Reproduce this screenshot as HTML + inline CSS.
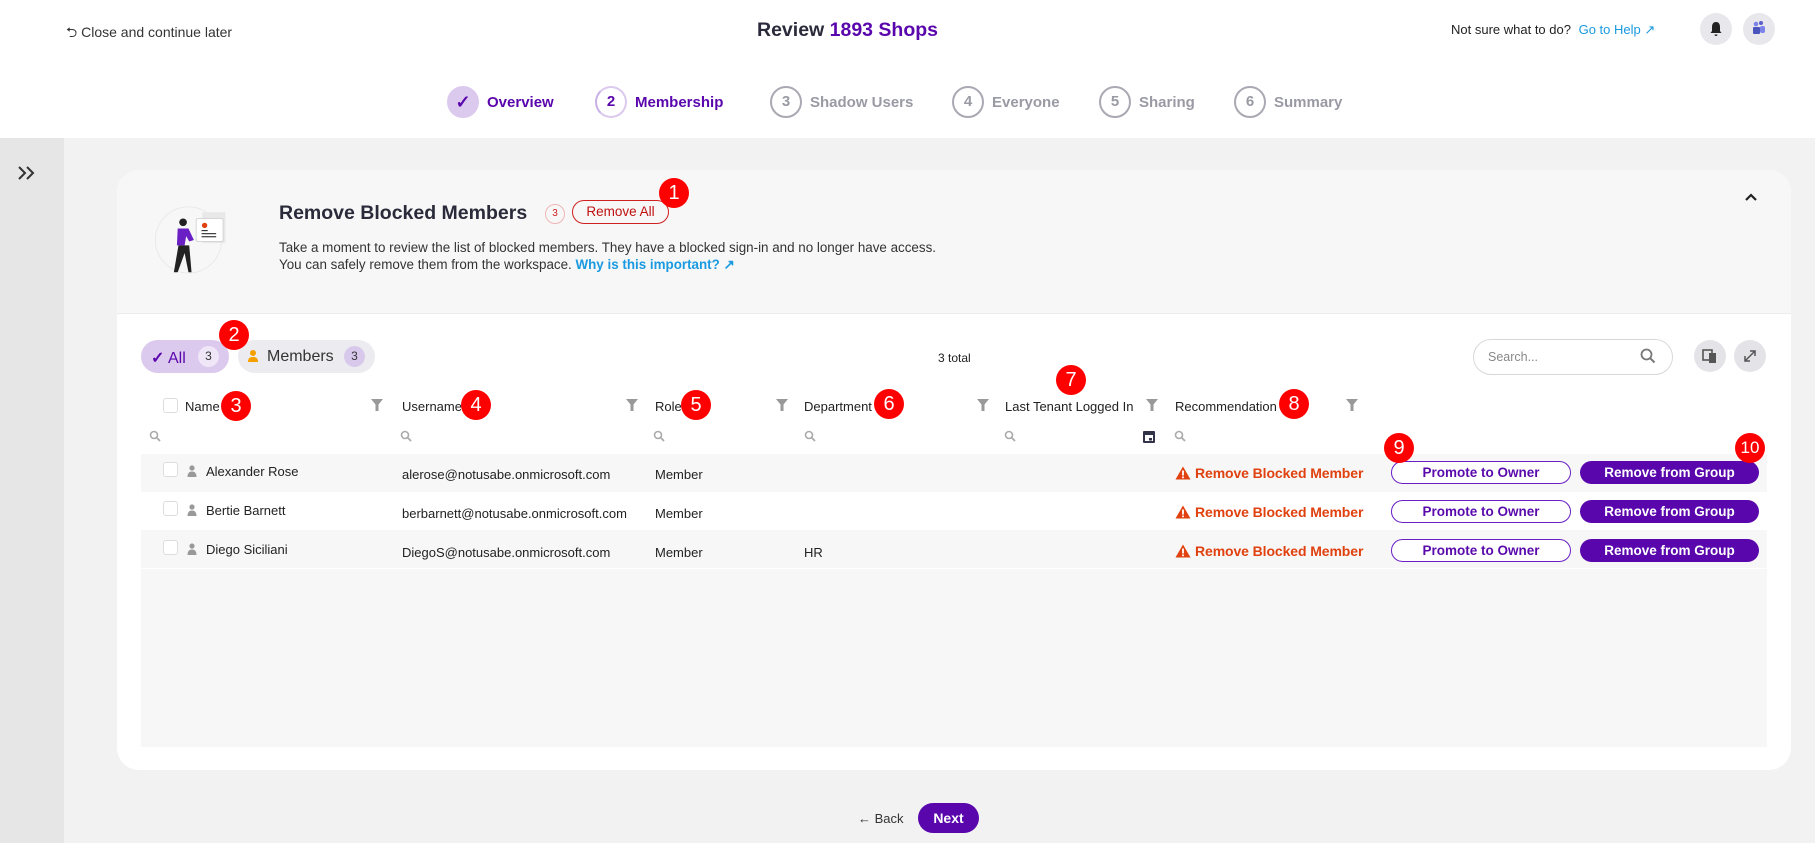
<!DOCTYPE html>
<html><head><meta charset="utf-8">
<style>
*{box-sizing:border-box;margin:0;padding:0}
body{width:1815px;height:843px;overflow:hidden;font-family:"Liberation Sans",sans-serif;background:#f2f2f2;position:relative;color:#222}
.a{position:absolute;white-space:nowrap}
.hdr{position:absolute;left:0;top:0;width:1815px;height:138px;background:#fff}
.side{position:absolute;left:0;top:138px;width:64px;height:705px;background:#e6e6e6}
.step{position:absolute;top:86px;width:32px;height:32px;border-radius:50%;border:2px solid #a9a9b3;color:#9a9aa5;font-size:15px;font-weight:bold;text-align:center;line-height:28px}
.stl{position:absolute;top:94px;font-size:15px;font-weight:bold;color:#9a9aa5}
.card{position:absolute;left:117px;top:170px;width:1674px;height:600px;background:#fff;border-radius:22px;overflow:hidden}
.top{position:absolute;left:0;top:0;width:1674px;height:144px;background:#f7f7f7;border-bottom:1px solid #ececec}
.badge{position:absolute;width:30px;height:30px;border-radius:50%;background:#f00;color:#fff;font-size:20px;text-align:center;line-height:30px}
.th{position:absolute;top:399px;font-size:13px;color:#222}
.fil{position:absolute;top:398px}
.srch{position:absolute;top:430px}
.row{position:absolute;left:141px;width:1626px;height:38px}
.cell{position:absolute;font-size:13px;color:#222}
.cb{position:absolute;width:15px;height:15px;border:1px solid #ddd;border-radius:3px;background:#fff}
.rec{position:absolute;left:1175px;font-size:14px;color:#e0410f;font-weight:bold;letter-spacing:-0.1px}
.rec svg{vertical-align:-2px;margin-right:4px}
.pro{position:absolute;left:1391px;width:180px;height:23px;border:1px solid #6a1fc4;border-radius:12px;color:#5a0aac;font-size:13.5px;font-weight:bold;text-align:center;line-height:21px;background:#fff}
.rfg{position:absolute;left:1580px;width:179px;height:23px;border-radius:12px;background:#5a06ad;color:#fff;font-size:13.5px;font-weight:bold;text-align:center;line-height:23px}
</style></head><body>
<div class="hdr"></div>
<div class="a" style="left:66px;top:22px;font-size:14px;color:#333">&#x2B8C;&#xFE0E; Close and continue later</div>
<div class="a" style="left:757px;top:19px;font-size:19.5px;font-weight:bold;color:#2a2a3a">Review <span style="color:#5a06ad">1893 Shops</span></div>
<div class="a" style="left:1451px;top:22px;font-size:13px;color:#222">Not sure what to do? <span style="color:#1a9ae0;margin-left:4px">Go to Help &#x2197;</span></div>
<div class="a" style="left:1700px;top:13px;width:32px;height:32px;border-radius:50%;background:#e8e8ec"></div>
<svg class="a" style="left:1709px;top:21px" width="14" height="16" viewBox="0 0 14 16"><path d="M7 1c-3 0-4 2.5-4 5v4L1.5 12h11L11 10V6c0-2.5-1-5-4-5z M5.5 13.5a1.5 1.5 0 0 0 3 0z" fill="#222"/></svg>
<div class="a" style="left:1743px;top:13px;width:32px;height:32px;border-radius:50%;background:#e8e8ec"></div>
<svg class="a" style="left:1751px;top:20px" width="16" height="16" viewBox="0 0 16 16"><circle cx="10" cy="3" r="2" fill="#5b5fc7"/><circle cx="5" cy="4" r="2.3" fill="#7b83eb"/><rect x="2" y="7" width="7" height="7" rx="1" fill="#4b53bc"/><rect x="9" y="6" width="5" height="7" rx="2" fill="#7b83eb"/></svg>

<div class="step" style="left:447px;background:#dcc9ee;border-color:#dcc9ee;color:#5a06ad;font-size:18px">&#x2713;</div>
<div class="stl" style="left:487px;color:#5a06ad">Overview</div>
<div class="step" style="left:595px;border-color:#dcc9ee;color:#5a06ad;border-left-color:#c9b0e6">2</div>
<div class="stl" style="left:635px;color:#5a06ad">Membership</div>
<div class="step" style="left:770px">3</div><div class="stl" style="left:810px">Shadow Users</div>
<div class="step" style="left:952px">4</div><div class="stl" style="left:992px">Everyone</div>
<div class="step" style="left:1099px">5</div><div class="stl" style="left:1139px">Sharing</div>
<div class="step" style="left:1234px">6</div><div class="stl" style="left:1274px">Summary</div>

<div class="side"></div>
<svg class="a" style="left:17px;top:165px" width="20" height="16" viewBox="0 0 20 16"><path d="M2 2l6 6-6 6M10 2l6 6-6 6" fill="none" stroke="#333" stroke-width="2"/></svg>

<div class="card">
 <div class="top"></div>
 <svg class="a" style="left:33px;top:24px" width="100" height="92" viewBox="0 0 130 100"><circle cx="50" cy="50" r="43" fill="none" stroke="#e6e6e6"/><rect x="68" y="14" width="30" height="40" fill="#e8e8e8"/><rect x="60" y="22" width="35" height="30" rx="2" fill="#fff" stroke="#ccc"/><circle cx="71" cy="31" r="3.5" fill="#e0410f"/><rect x="67" y="37" width="8" height="1.5" fill="#333"/><rect x="67" y="41" width="19" height="1.5" fill="#333"/><rect x="67" y="45" width="19" height="1.5" fill="#333"/><circle cx="43" cy="27" r="5" fill="#222"/><path d="M36 35l14 0 7 15-6 2-4-7-2 12-10 0z" fill="#6a1fc4"/><path d="M37 57l14 0 3 35-4 0-5-25-9 25-5 0z" fill="#222"/></svg>
 <div class="a" style="left:162px;top:32px;font-size:19.5px;font-weight:bold;color:#2a2a3a">Remove Blocked Members</div>
 <div class="a" style="left:428px;top:34px;width:20px;height:20px;border-radius:50%;border:1px solid #f2b6b6;color:#d02020;font-size:10px;text-align:center;line-height:18px">3</div>
 <div class="a" style="left:455px;top:30px;width:97px;height:24px;border:1px solid #d02020;border-radius:12px;color:#c01010;font-size:13.5px;text-align:center;line-height:22px">Remove All</div>
 <div class="badge" style="left:542px;top:8px">1</div>
 <div class="a" style="left:162px;top:70px;font-size:13.4px;color:#333;line-height:16.5px">Take a moment to review the list of blocked members. They have a blocked sign-in and no longer have access.<br>You can safely remove them from the workspace. <span style="color:#1a9ae0;font-weight:bold">Why is this important? &#x2197;</span></div>
 <svg class="a" style="left:1627px;top:22px" width="14" height="10" viewBox="0 0 14 10"><path d="M2 8l5-5 5 5" fill="none" stroke="#222" stroke-width="2.2"/></svg>
 <div class="a" style="left:24px;top:399px;width:1626px;height:178px;background:#f7f7f7"></div>
</div>

<div class="a" style="left:141px;top:340px;width:88px;height:33px;border-radius:17px;background:#dcc9ee"></div>
<div class="a" style="left:151px;top:348px;font-size:16px;color:#5a06ad"><b>&#x2713;</b> All</div>
<div class="a" style="left:198px;top:346px;width:21px;height:21px;border-radius:50%;background:#efe7f8;color:#333;font-size:12px;text-align:center;line-height:21px">3</div>
<div class="a" style="left:238px;top:340px;width:137px;height:33px;border-radius:17px;background:#ececf0"></div>
<svg class="a" style="left:247px;top:349px" width="12" height="14" viewBox="0 0 12 14"><circle cx="6" cy="4" r="3" fill="#f5a000"/><path d="M1 13c0-4 2-5 5-5s5 1 5 5z" fill="#f5a000"/></svg>
<div class="a" style="left:267px;top:348px;font-size:16px;color:#333">Members</div>
<div class="a" style="left:344px;top:346px;width:21px;height:21px;border-radius:50%;background:#d8c9ec;color:#333;font-size:12px;text-align:center;line-height:21px">3</div>
<div class="badge" style="left:219px;top:320px">2</div>
<div class="a" style="left:938px;top:351px;font-size:12px;color:#222">3 total</div>
<div class="a" style="left:1473px;top:339px;width:200px;height:36px;border:1px solid #d8d8d8;border-radius:18px;background:#fff"></div>
<div class="a" style="left:1488px;top:350px;font-size:12.5px;color:#888">Search...</div>
<svg class="a" style="left:1640px;top:348px" width="16" height="16" viewBox="0 0 16 16"><circle cx="6.5" cy="6.5" r="5" fill="none" stroke="#777" stroke-width="1.8"/><path d="M10 10l4.5 4.5" stroke="#777" stroke-width="2"/></svg>
<div class="a" style="left:1694px;top:340px;width:32px;height:32px;border-radius:50%;background:#e4e4e8"></div>
<svg class="a" style="left:1702px;top:348px" width="16" height="16" viewBox="0 0 16 16"><rect x="1" y="2" width="9" height="10" fill="none" stroke="#555" stroke-width="1.6"/><rect x="7" y="5" width="7" height="10" fill="#555"/></svg>
<div class="a" style="left:1734px;top:340px;width:32px;height:32px;border-radius:50%;background:#e4e4e8"></div>
<svg class="a" style="left:1743px;top:349px" width="14" height="14" viewBox="0 0 14 14"><path d="M2 12L12 2M7 2h5v5M2 7v5h5" fill="none" stroke="#555" stroke-width="1.5"/></svg>

<div class="cb" style="left:163px;top:398px"></div>
<div class="th" style="left:185px">Name</div>
<div class="th" style="left:402px">Username</div>
<div class="th" style="left:655px">Role</div>
<div class="th" style="left:804px">Department</div>
<div class="th" style="left:1005px">Last Tenant Logged In</div>
<div class="th" style="left:1175px">Recommendation</div>
<svg width="0" height="0" style="position:absolute"><defs><symbol id="f" viewBox="0 0 14 14"><path d="M1 1h12L8.5 6.5V13h-3V6.5z" fill="#999"/></symbol><symbol id="s" viewBox="0 0 12 12"><circle cx="5" cy="5" r="3.5" fill="none" stroke="#aaa" stroke-width="1.6"/><path d="M7.5 7.5L11 11" stroke="#aaa" stroke-width="1.8"/></symbol><symbol id="p" viewBox="0 0 10 12"><circle cx="5" cy="3" r="2.6" fill="#999"/><path d="M0.5 12c0-4 2-5.5 4.5-5.5S9.5 8 9.5 12z" fill="#999"/></symbol><symbol id="w" viewBox="0 0 16 14"><path d="M8 0.5L15.5 13.5H0.5z" fill="#e0410f"/><rect x="7.1" y="4.5" width="1.8" height="5" fill="#fff"/><rect x="7.1" y="10.5" width="1.8" height="1.7" fill="#fff"/></symbol></defs></svg>
<svg class="fil" style="left:370px" width="14" height="14"><use href="#f"/></svg>
<svg class="fil" style="left:625px" width="14" height="14"><use href="#f"/></svg>
<svg class="fil" style="left:775px" width="14" height="14"><use href="#f"/></svg>
<svg class="fil" style="left:976px" width="14" height="14"><use href="#f"/></svg>
<svg class="fil" style="left:1145px" width="14" height="14"><use href="#f"/></svg>
<svg class="fil" style="left:1345px" width="14" height="14"><use href="#f"/></svg>
<svg class="srch" style="left:149px" width="12" height="12"><use href="#s"/></svg>
<svg class="srch" style="left:400px" width="12" height="12"><use href="#s"/></svg>
<svg class="srch" style="left:653px" width="12" height="12"><use href="#s"/></svg>
<svg class="srch" style="left:804px" width="12" height="12"><use href="#s"/></svg>
<svg class="srch" style="left:1004px" width="12" height="12"><use href="#s"/></svg>
<svg class="srch" style="left:1174px" width="12" height="12"><use href="#s"/></svg>
<svg class="a" style="left:1142px;top:429px" width="14" height="15" viewBox="0 0 14 15"><rect x="1" y="2" width="12" height="12" rx="1" fill="#333348"/><rect x="3" y="6" width="8" height="6" fill="#fff"/><rect x="7" y="9" width="3" height="2.5" fill="#333348"/></svg>
<div class="badge" style="left:221px;top:391px">3</div>
<div class="badge" style="left:461px;top:390px">4</div>
<div class="badge" style="left:681px;top:390px">5</div>
<div class="badge" style="left:874px;top:389px">6</div>
<div class="badge" style="left:1056px;top:365px">7</div>
<div class="badge" style="left:1279px;top:389px">8</div>

<div class="row" style="top:454px;background:#f7f7f7"></div>
<div class="row" style="top:492px;background:#fff"></div>
<div class="row" style="top:530px;background:#f7f7f7"></div>

<div class="cb" style="left:163px;top:462px"></div>
<svg class="a" style="left:187px;top:465px" width="10" height="12"><use href="#p"/></svg>
<div class="cell" style="left:206px;top:464px">Alexander Rose</div>
<div class="cell" style="left:402px;top:467px">alerose@notusabe.onmicrosoft.com</div>
<div class="cell" style="left:655px;top:467px">Member</div>
<div class="rec" style="top:465px"><svg width="16" height="14"><use href="#w"/></svg>Remove Blocked Member</div>
<div class="pro" style="top:461px">Promote to Owner</div>
<div class="rfg" style="top:461px">Remove from Group</div>

<div class="cb" style="left:163px;top:501px"></div>
<svg class="a" style="left:187px;top:504px" width="10" height="12"><use href="#p"/></svg>
<div class="cell" style="left:206px;top:503px">Bertie Barnett</div>
<div class="cell" style="left:402px;top:506px">berbarnett@notusabe.onmicrosoft.com</div>
<div class="cell" style="left:655px;top:506px">Member</div>
<div class="rec" style="top:504px"><svg width="16" height="14"><use href="#w"/></svg>Remove Blocked Member</div>
<div class="pro" style="top:500px">Promote to Owner</div>
<div class="rfg" style="top:500px">Remove from Group</div>

<div class="cb" style="left:163px;top:540px"></div>
<svg class="a" style="left:187px;top:543px" width="10" height="12"><use href="#p"/></svg>
<div class="cell" style="left:206px;top:542px">Diego Siciliani</div>
<div class="cell" style="left:402px;top:545px">DiegoS@notusabe.onmicrosoft.com</div>
<div class="cell" style="left:655px;top:545px">Member</div>
<div class="cell" style="left:804px;top:545px">HR</div>
<div class="rec" style="top:543px"><svg width="16" height="14"><use href="#w"/></svg>Remove Blocked Member</div>
<div class="pro" style="top:539px">Promote to Owner</div>
<div class="rfg" style="top:539px">Remove from Group</div>

<div class="badge" style="left:1384px;top:433px">9</div>
<div class="badge" style="left:1735px;top:433px;font-size:17px">10</div>

<div class="a" style="left:858px;top:811px;font-size:13px;color:#333">&#x2190; Back</div>
<div class="a" style="left:918px;top:803px;width:61px;height:30px;border-radius:15px;background:#5a06ad;color:#fff;font-size:14px;font-weight:bold;text-align:center;line-height:30px">Next</div>
</body></html>
